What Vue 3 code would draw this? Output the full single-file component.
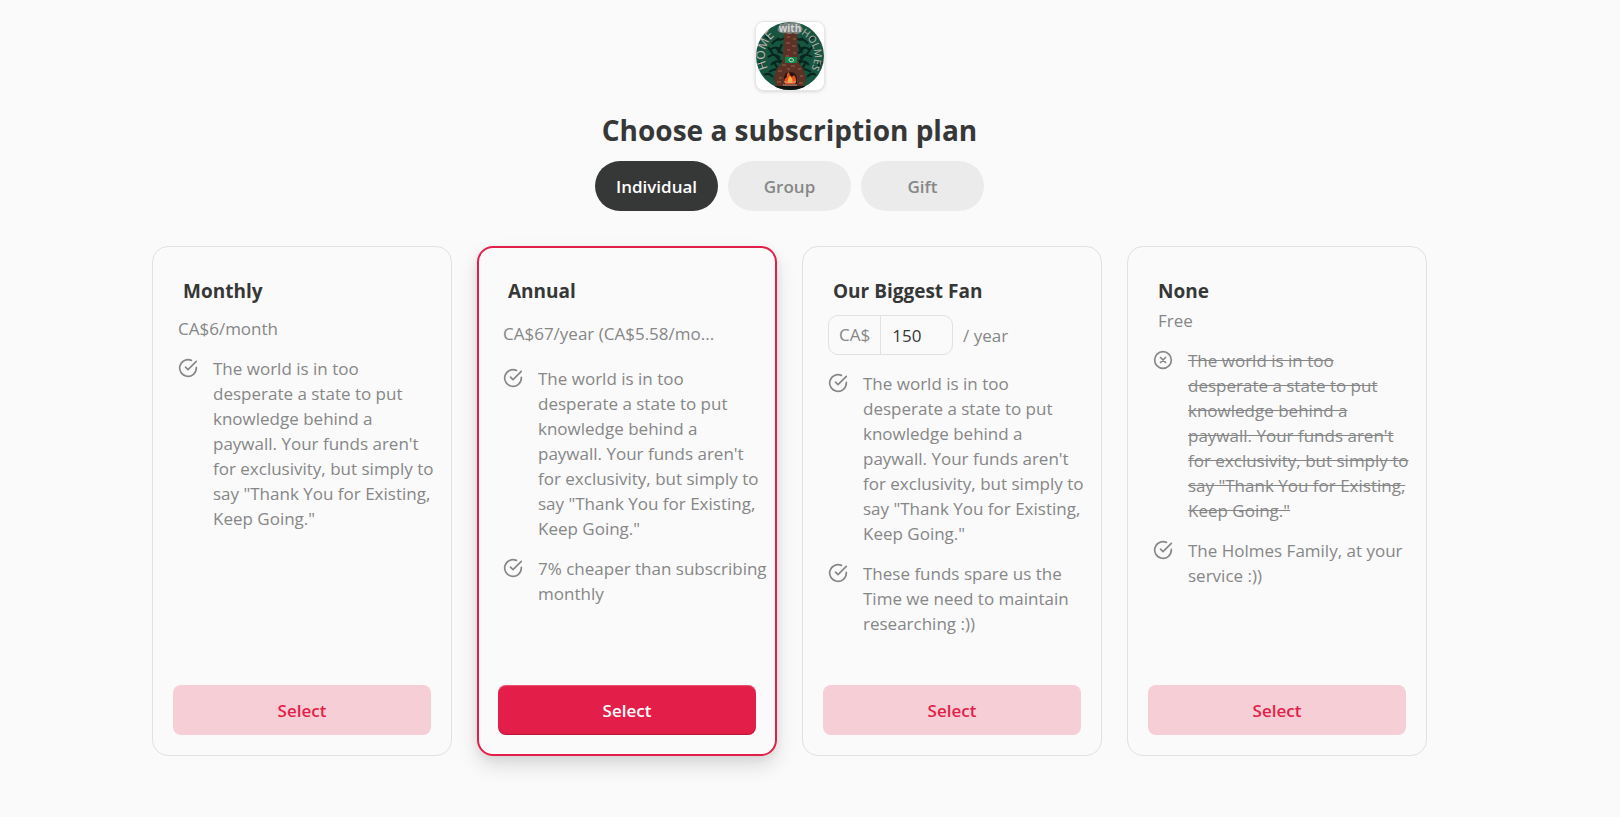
<script setup>
import { ref } from 'vue'

const audiences = ['Individual', 'Group', 'Gift']
const audience = ref('Individual')
const amount = ref('150')

const thanks =
  'The world is in too desperate a state to put knowledge behind a paywall.\u00a0Your funds aren\'t for exclusivity, but simply to say "Thank You for Existing, Keep Going."'

const plans = [
  { id: 'monthly', name: 'Monthly', price: 'CA$6/month', perks: [{ text: thanks }] },
  {
    id: 'annual',
    name: 'Annual',
    price: 'CA$67/year (CA$5.58/mo...',
    featured: true,
    perks: [{ text: thanks }, { text: '7% cheaper than subscribing monthly' }]
  },
  {
    id: 'founding',
    name: 'Our Biggest Fan',
    custom: true,
    perks: [{ text: thanks }, { text: 'These funds spare us the Time we need to maintain researching :))' }]
  },
  {
    id: 'free',
    name: 'None',
    price: 'Free',
    perks: [{ text: thanks, excluded: true }, { text: 'The Holmes Family, at your service :))' }]
  }
]
</script>

<template>
  <main class="page">
    <svg class="logo" viewBox="0 0 68 68" role="img" aria-label="Home with Holmes">
      <defs>
        <clipPath id="disc"><circle cx="34" cy="34" r="34" /></clipPath>
        <path id="arc-left" d="M12 46 A25 25 0 0 1 30 9" />
        <path id="arc-right" d="M45 12 A25 25 0 0 1 51 52" />
      </defs>
      <rect width="68" height="68" rx="8" fill="#fff" />
      <g clip-path="url(#disc)">
        <rect width="68" height="68" fill="#175540" />
        <g class="leaves">
          <path d="M16 22q4-6 9-4M14 28q6-5 11 0M12 35q7-5 12 1M15 43q5-6 10-2M13 50q7-5 11-1M18 57q5-5 9-3M21 16q4 3 7 0M20 25q3 6 7 6M19 33q4 6 7 6M18 40q3 7 7 7M8 53q5-3 9 2M12 25l5 7M26 22l-4 9" />
          <path d="M52 22q-4-6-9-4M54 28q-6-5-11 0M56 35q-7-5-12 1M53 43q-5-6-10-2M55 50q-7-5-11-1M50 57q-5-5-9-3M47 16q-4 3-7 0M48 25q-3 6-7 6M49 33q-4 6-7 6M50 40q-3 7-7 7M60 53q-5-3-9 2M56 25l-5 7M42 22l4 9" />
          <path d="M3 40l4 4M62 44l4-4M9 14l4 3M59 14l-5 3" />
        </g>
        <path d="M28 9h13l1 28q1 6 5 9l3 10-2 9H20l-2-9 3-10q5-3 6-9z" fill="#5b3225" />
        <g class="bricks">
          <path d="M31 15h3M37 17h3M30 21h4M36 24h4M31 28h3M37 31h3M30 34h3M26 43h4M35 44h4M42 47h3M22 49h4M31 47h3M23 56h3M44 54h3M21 60h4M43 61h4" />
        </g>
        <path d="M28 63V56q0-6 6-6t7 6v7z" fill="#241713" />
        <path d="M29 62q-2-5 2-7-1-3 2-5 0 3 3 5l2-2q4 5 1 9z" fill="#e8511d" />
        <path d="M32 61q-1-4 2-7 4 4 2 7z" fill="#ffad45" />
        <path d="M28 60h12M27 63h14" stroke="#d9a083" stroke-width="1" />
        <rect x="29" y="35" width="12" height="6" fill="#12834d" />
        <path d="M33 37q2-2 4 0t-1 3q-3 0-3-2z" fill="none" stroke="#b9dfc9" />
        <path d="M19 66h30" stroke="#101713" stroke-width="4" />
        <path d="M23 10q-3-3 0-5 0-4 4-3 2-3 6-1 3-2 6 0 5-1 6 3 4 4-1 7-4 2-7 0-4 2-7 0-3 1-7-1z" fill="#8b8d8c" opacity=".85" />
      </g>
      <text class="mark">
        <textPath href="#arc-left">HOME</textPath>
      </text>
      <text class="mark small">
        <textPath href="#arc-right">HOLMES</textPath>
      </text>
      <text class="mark with" x="34" y="10" text-anchor="middle">with</text>
    </svg>

    <h1 class="title">Choose a subscription plan</h1>

    <div class="tabs" role="group" aria-label="Subscription type">
      <button
        v-for="item in audiences"
        :key="item"
        type="button"
        class="tab"
        :class="{ active: item === audience }"
        :aria-pressed="item === audience"
        @click="audience = item"
      >
        {{ item }}
      </button>
    </div>

    <section class="plans">
      <article v-for="plan in plans" :key="plan.id" class="plan" :class="[plan.id, { featured: plan.featured }]">
        <h2 class="name">{{ plan.name }}</h2>

        <div v-if="plan.custom" class="price custom">
          <div class="amount">
            <label for="amount">CA$</label>
            <input id="amount" v-model="amount" type="text" inputmode="numeric" />
          </div>
          <span>/ year</span>
        </div>
        <p v-else class="price">{{ plan.price }}</p>

        <ul class="perks">
          <li v-for="perk in plan.perks" :key="perk.text" class="perk">
            <svg class="icon" viewBox="0 0 24 24" aria-hidden="true">
              <template v-if="perk.excluded">
                <circle cx="12" cy="12" r="10" />
                <path d="M15 9l-6 6M9 9l6 6" />
              </template>
              <template v-else>
                <path d="M22 11.080V12a10 10 0 1 1-5.930-9.140" />
                <path d="M22 4L12 14.010l-3-3" />
              </template>
            </svg>
            <s v-if="perk.excluded">{{ perk.text }}</s>
            <span v-else>{{ perk.text }}</span>
          </li>
        </ul>

        <button type="button" class="select">Select</button>
      </article>
    </section>
  </main>
</template>

<style>
body {
  margin: 0;
  background: #fafafa;
}
</style>

<style scoped>
.page {
  box-sizing: border-box;
  display: flex;
  flex-direction: column;
  align-items: center;
  padding: 22px 41px 40px 0;
  color: #363737;
  font-family: "Segoe UI", "Open Sans", "Noto Sans", sans-serif;
  font-size: 17px;
  line-height: 25px;
}

.logo {
  width: 68px;
  height: 68px;
  overflow: visible;
  border-radius: 8px;
  box-shadow: 0 0 0 1px #e6e6e6, 0 1px 4px rgba(0, 0, 0, 0.2);
}

.leaves {
  fill: none;
  stroke: #07251c;
  stroke-width: 2;
}

.bricks {
  stroke: #9a6248;
  stroke-width: 1;
}

.mark {
  fill: #c4b8b8;
  font-family: "Open Sans", sans-serif;
  font-size: 12px;
}

.mark.small {
  font-size: 10px;
}

.mark.with {
  fill: #d5d5d5;
  font-size: 10px;
  font-weight: 700;
}

.title {
  margin: 20px 0 11px;
  font-size: 28px;
  font-weight: 700;
  line-height: 40px;
}

.tabs {
  display: grid;
  grid-template-columns: repeat(3, 1fr);
  gap: 10px;
  width: 389px;
  max-width: 100%;
}

.tab,
.select {
  height: 50px;
  padding: 0;
  border: 0;
  font: inherit;
  font-weight: 600;
  cursor: pointer;
}

.tab {
  border-radius: 25px;
  background: #ebebeb;
  color: #868787;
}

.tab.active {
  background: #363737;
  color: #fff;
}

.plans {
  display: grid;
  grid-template-columns: repeat(4, 1fr);
  gap: 25px;
  width: 100%;
  max-width: 1275px;
  margin-top: 35px;
}

.plan {
  display: flex;
  flex-direction: column;
  padding: 32px 20px 20px;
  border: 1px solid #e1e1e1;
  border-radius: 16px;
}

.plan.featured {
  padding: 31px 19px 19px;
  border: 2px solid #e31e48;
  box-shadow: 0 10px 20px rgba(0, 0, 0, 0.12), 0 3px 8px rgba(0, 0, 0, 0.06);
}

.name {
  margin: 0 10px;
  font-size: 19px;
  font-weight: 700;
  line-height: 25px;
}

.price {
  margin: 12px 5px 15px;
  color: #868787;
}

.annual .price {
  margin: 17px 5px 20px;
}

.founding .price {
  margin: 11px 5px 16px;
}

.free .price {
  margin: 4px 10px 15px;
}

.custom {
  display: flex;
  align-items: center;
  gap: 10px;
}

.amount {
  box-sizing: border-box;
  display: flex;
  width: 125px;
  height: 40px;
  border: 1px solid #e1e1e1;
  border-radius: 10px;
}

.amount label {
  padding: 0 10px;
  line-height: 38px;
}

.amount input {
  box-sizing: border-box;
  flex: 1;
  min-width: 0;
  padding: 0 11px;
  border: 0;
  border-left: 1px solid #e1e1e1;
  background: none;
  color: #363737;
  font: inherit;
  outline: 0;
}

.perks {
  display: flex;
  flex-direction: column;
  gap: 15px;
  margin: 0 -12px 49px 0;
  padding: 0 0 0 5px;
  color: #868787;
  list-style: none;
}

.perk {
  display: flex;
  gap: 15px;
}

.icon {
  flex: none;
  width: 20px;
  height: 20px;
  margin-top: 2px;
  fill: none;
  stroke: #868787;
  stroke-width: 2;
  stroke-linecap: round;
  stroke-linejoin: round;
}

.select {
  margin-top: auto;
  border-radius: 8px;
  background: #f6ced6;
  color: #e31e48;
}

.featured .select {
  background: #e31e48;
  color: #fff;
  box-shadow: inset 0 1px 1px rgba(255, 255, 255, 0.25), inset 0 -1px 1px rgba(0, 0, 0, 0.2);
}
</style>
